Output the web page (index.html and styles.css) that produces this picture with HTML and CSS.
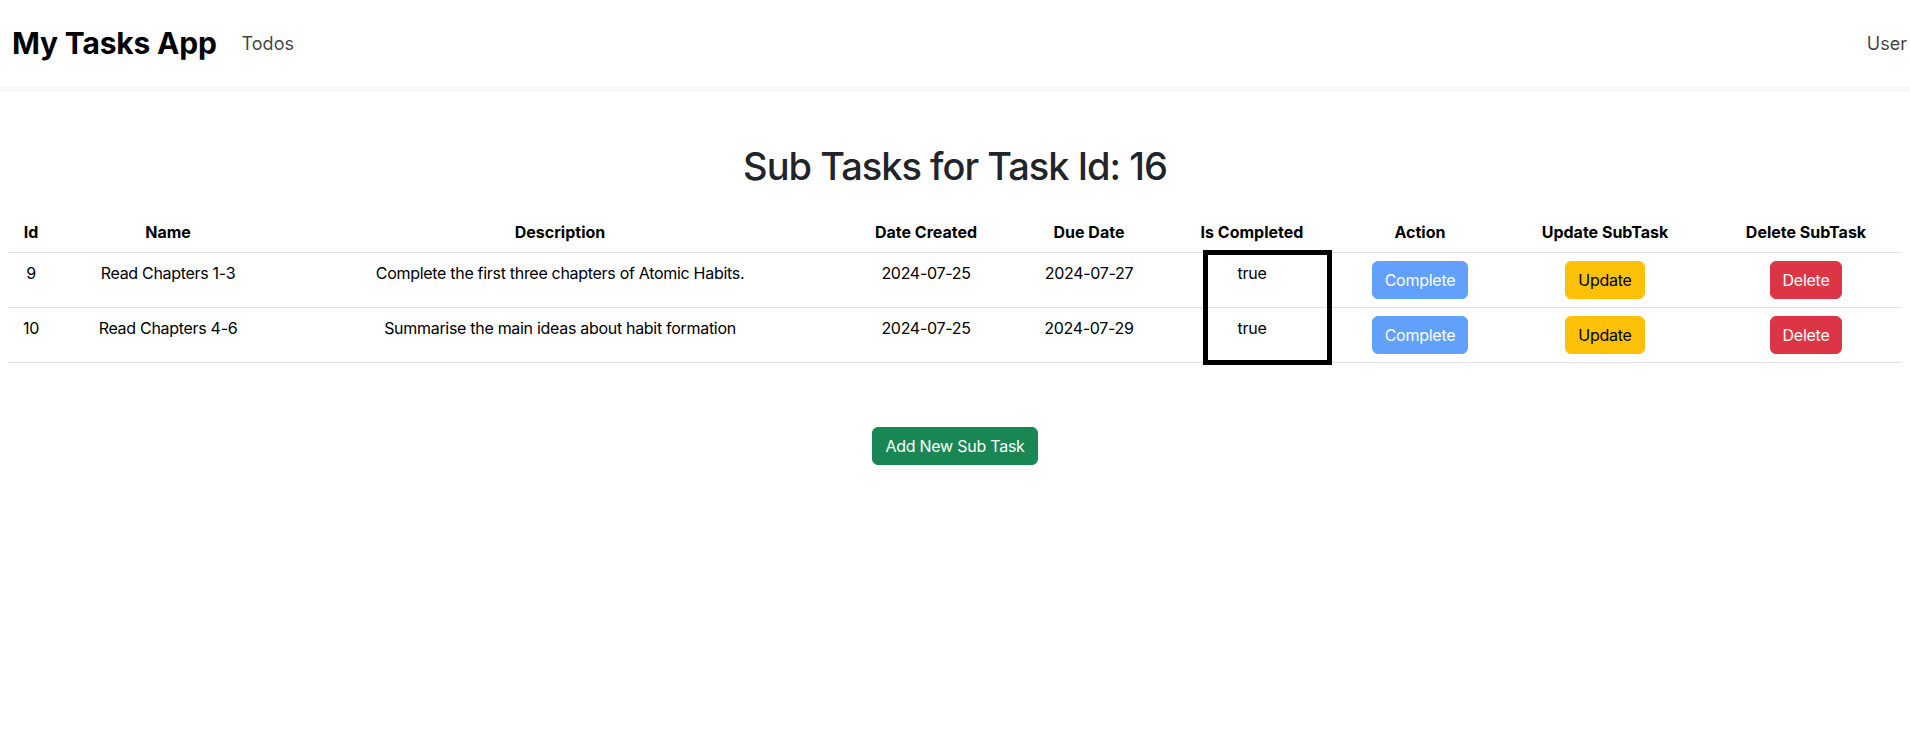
FILE: index.html
```html
<!DOCTYPE html>
<html lang="en">
<head>
<meta charset="utf-8">
<title>My Tasks App</title>
<link rel="stylesheet" href="styles.css">
</head>
<body>
<header class="navbar">
  <div class="nav-left">
    <span class="brand">My Tasks App</span>
    <a class="nav-link" href="#">Todos</a>
  </div>
  <a class="nav-link nav-user" href="#">User</a>
</header>
<div class="nav-shadow"></div>
<main class="main">
  <h1 class="title">Sub Tasks for Task Id: 16</h1>
  <div class="table-wrap">
    <table class="table">
      <colgroup>
        <col class="c-id"><col class="c-name"><col class="c-desc"><col class="c-created"><col class="c-due"><col class="c-done"><col class="c-action"><col class="c-update"><col class="c-delete">
      </colgroup>
      <thead>
        <tr>
          <th>Id</th><th>Name</th><th>Description</th><th>Date Created</th><th>Due Date</th><th>Is Completed</th><th>Action</th><th>Update SubTask</th><th>Delete SubTask</th>
        </tr>
      </thead>
      <tbody>
        <tr>
          <td>9</td>
          <td>Read Chapters 1-3</td>
          <td>Complete the first three chapters of Atomic Habits.</td>
          <td>2024-07-25</td>
          <td>2024-07-27</td>
          <td>true</td>
          <td><button class="btn btn-primary" disabled>Complete</button></td>
          <td><button class="btn btn-warning">Update</button></td>
          <td><button class="btn btn-danger">Delete</button></td>
        </tr>
        <tr>
          <td>10</td>
          <td>Read Chapters 4-6</td>
          <td>Summarise the main ideas about habit formation</td>
          <td>2024-07-25</td>
          <td>2024-07-29</td>
          <td>true</td>
          <td><button class="btn btn-primary" disabled>Complete</button></td>
          <td><button class="btn btn-warning">Update</button></td>
          <td><button class="btn btn-danger">Delete</button></td>
        </tr>
      </tbody>
    </table>
    <div class="focus-box"></div>
  </div>
  <div class="add-row">
    <button class="btn btn-success">Add New Sub Task</button>
  </div>
</main>
</body>
</html>
```
FILE: styles.css
```css
* { box-sizing: border-box; }
body {
  margin: 0;
  font-family: "Inter", "Liberation Sans", sans-serif;
  font-size: 16px;
  line-height: 1.5;
  color: #212529;
  background: #fff;
}
.navbar {
  height: 87px;
  display: flex;
  align-items: center;
  justify-content: space-between;
  padding: 0 3px 0 12px;
  background: #fff;
}
.nav-left { display: flex; align-items: center; gap: 25px; }
.brand {
  font-size: 30px;
  font-weight: 700;
  color: #000;
  letter-spacing: -0.2px;
}
.nav-link {
  font-size: 18px;
  color: rgba(0,0,0,0.75);
  text-decoration: none;
}
.nav-shadow { height: 5px; background: #f6f7f9; }
.main { padding: 50px 8px 0; }
.title {
  margin: 0 0 22px;
  text-align: center;
  font-size: 38px;
  font-weight: 500;
  line-height: 48px;
  letter-spacing: -1px;
  color: #212529;
}
.table-wrap { position: relative; }
.table {
  width: 100%;
  table-layout: fixed;
  border-collapse: collapse;
  color: #000;
}
.c-id { width: 46px; }
.c-name { width: 228px; }
.c-desc { width: 556px; }
.c-created { width: 176px; }
.c-due { width: 150px; }
.c-done { width: 176px; }
.c-action { width: 160px; }
.c-update { width: 210px; }
.c-delete { width: 192px; }
.table th, .table td {
  padding: 8px;
  text-align: center;
  vertical-align: top;
  border-bottom: 1px solid #dee2e6;
  line-height: 24px;
}
.table td { letter-spacing: -0.3px; }
.table th { font-weight: 700; vertical-align: bottom; }
.btn {
  display: inline-block;
  font-family: inherit;
  font-size: 16px;
  line-height: 24px;
  padding: 6px 12px;
  border: 1px solid transparent;
  border-radius: 6px;
  letter-spacing: -0.25px;
  cursor: pointer;
}
.btn-primary { background: #0d6efd; border-color: #0d6efd; color: #fff; }
.btn-primary:disabled { opacity: 0.65; }
.btn-warning { background: #ffc107; border-color: #ffc107; color: #000; }
.btn-danger { background: #dc3545; border-color: #dc3545; color: #fff; }
.btn-success { background: #198754; border-color: #198754; color: #fff; }
.focus-box {
  position: absolute;
  left: 1195px;
  top: 38px;
  width: 129px;
  height: 115px;
  border: 5px solid #000;
  pointer-events: none;
}
.add-row {
  display: flex;
  justify-content: center;
  margin-top: 64px;
}
```
